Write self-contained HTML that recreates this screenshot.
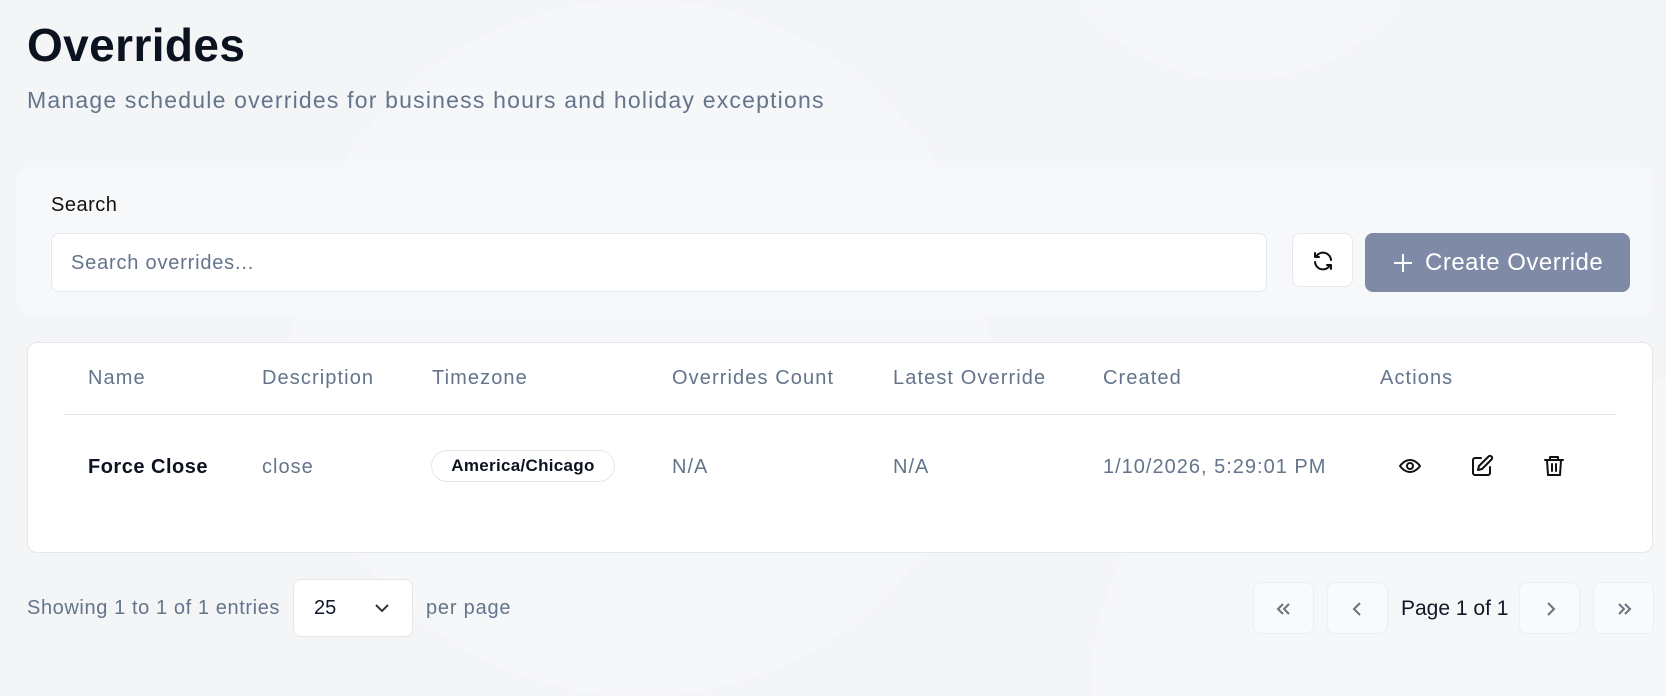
<!DOCTYPE html>
<html style="width:1666px;height:696px;overflow:hidden"><head><meta charset="utf-8"><style>
*{box-sizing:border-box;margin:0;padding:0}
body{width:1666px;height:696px;overflow:hidden;background:#f4f5f7;font-family:"Liberation Sans",sans-serif;position:relative;color:#0f172a}
.bg{position:absolute;left:0;top:0;width:1666px;height:696px;overflow:hidden}
.circ{position:absolute;border-radius:50%;background:#f6f7f9}
.abs{position:absolute}
h1{position:absolute;left:27px;top:18px;font-size:46px;font-weight:700;color:#0b1220;letter-spacing:0.4px}
.sub{position:absolute;left:27px;top:87px;font-size:23px;color:#64748b;letter-spacing:1.2px}
.panel{position:absolute;left:17px;top:167px;width:1636px;height:149px;background:#f7f8fa;border-radius:14px}
.lbl{position:absolute;left:51px;top:194px;font-size:20px;color:#111;letter-spacing:0.5px}
.inp{position:absolute;left:51px;top:233px;width:1216px;height:59px;background:#fff;border:1px solid #e2e8f0;border-radius:8px;padding-left:19px;line-height:59px;font-size:20px;color:#64748b;letter-spacing:0.8px}
.btn{position:absolute;background:#fff;border:1px solid #e5e7eb;border-radius:8px}
.create{position:absolute;left:1365px;top:233px;width:265px;height:59px;background:#7f8ba6;border-radius:8px;color:#fff;font-size:24px;line-height:59px;padding-left:60px;letter-spacing:0.5px}
.card{position:absolute;left:27px;top:342px;width:1626px;height:211px;background:#fff;border:1px solid #e5e7eb;border-radius:10px}
.th{position:absolute;top:367px;font-size:20px;color:#64748b;letter-spacing:1.1px}
.td{position:absolute;top:456px;font-size:20px;color:#64748b;letter-spacing:1px}
.pg{position:absolute;top:582px;width:61px;height:52px;background:#f9fafb;border:1px solid #eceef2;border-radius:8px}
</style></head><body>
<div class="bg">
<div class="circ" style="left:290px;top:0px;width:700px;height:696px"></div>
<div class="circ" style="left:1050px;top:-260px;width:380px;height:340px"></div>
<div class="circ" style="left:1090px;top:380px;width:576px;height:316px;border-radius:316px 0 0 0"></div>
</div>
<h1>Overrides</h1>
<div class="sub">Manage schedule overrides for business hours and holiday exceptions</div>
<div class="panel"></div>
<div class="lbl">Search</div>
<div class="inp">Search overrides...</div>
<div class="btn" style="left:1292px;top:233px;width:61px;height:54px">
<svg class="abs" style="left:18px;top:15px" width="24" height="24" viewBox="0 0 24 24" fill="none" stroke="#111" stroke-width="2" stroke-linecap="round" stroke-linejoin="round"><path d="M20 11A8 8 0 0 0 5.5 7M4 4v4h4"/><path d="M4 13a8 8 0 0 0 14.5 4M20 20v-4h-4"/></svg></div>
<div class="create"><svg class="abs" style="left:27px;top:19px" width="22" height="22" viewBox="0 0 22 22" stroke="#fff" stroke-width="2"><path d="M11 2v18M2 11h18"/></svg>Create Override</div>
<div class="card"></div>
<div class="th" style="left:88px">Name</div>
<div class="th" style="left:262px">Description</div>
<div class="th" style="left:432px">Timezone</div>
<div class="th" style="left:672px">Overrides Count</div>
<div class="th" style="left:893px">Latest Override</div>
<div class="th" style="left:1103px">Created</div>
<div class="th" style="left:1380px">Actions</div>
<div class="abs" style="left:64px;top:414px;width:1553px;height:1px;background:#e2e8f0"></div>
<div class="td" style="left:88px;color:#0b1220;font-weight:700;letter-spacing:0.5px">Force Close</div>
<div class="td" style="left:262px">close</div>
<div class="abs" style="left:431px;top:450px;width:184px;height:32px;border:1px solid #e2e8f0;border-radius:16px;text-align:center;line-height:30px;font-size:17px;font-weight:700;color:#0b1220;letter-spacing:0.3px">America/Chicago</div>
<div class="td" style="left:672px">N/A</div>
<div class="td" style="left:893px">N/A</div>
<div class="td" style="left:1103px">1/10/2026, 5:29:01 PM</div>
<svg class="abs" style="left:1398px;top:454px" width="24" height="24" viewBox="0 0 24 24" fill="none" stroke="#111" stroke-width="2"><path d="M2 12s4-6 10-6 10 6 10 6-4 6-10 6S2 12 2 12z"/><circle cx="12" cy="12" r="3"/></svg>
<svg class="abs" style="left:1470px;top:454px" width="24" height="24" viewBox="0 0 24 24" fill="none" stroke="#111" stroke-width="2" stroke-linejoin="round" stroke-linecap="round"><path d="M11 4H5a2 2 0 0 0-2 2v13a2 2 0 0 0 2 2h13a2 2 0 0 0 2-2v-6"/><path d="M18.5 2.5a2.1 2.1 0 0 1 3 3L12 15l-4 1 1-4z"/></svg>
<svg class="abs" style="left:1542px;top:454px" width="24" height="24" viewBox="0 0 24 24" fill="none" stroke="#111" stroke-width="2" stroke-linejoin="round" stroke-linecap="round"><path d="M3 6h18M8 6V3h8v3M5 6l1 15h12l1-15M10 10v7M14 10v7"/></svg>
<div class="abs" style="left:27px;top:597px;font-size:20px;color:#64748b;letter-spacing:0.6px">Showing 1 to 1 of 1 entries</div>
<div class="abs" style="left:293px;top:579px;width:120px;height:58px;background:#fff;border:1px solid #e5e7eb;border-radius:8px;font-size:20px;line-height:56px;padding-left:20px">25
<svg class="abs" style="left:80px;top:22px" width="16" height="12" viewBox="0 0 16 12" fill="none" stroke="#333" stroke-width="2"><path d="M2 3l6 6 6-6"/></svg></div>
<div class="abs" style="left:426px;top:597px;font-size:20px;color:#64748b;letter-spacing:0.8px">per page</div>
<div class="pg" style="left:1253px"><svg class="abs" style="left:20px;top:16px" width="20" height="20" viewBox="0 0 20 20" fill="none" stroke="#6b7280" stroke-width="2"><path d="M9 5l-5 5 5 5M15 5l-5 5 5 5"/></svg></div>
<div class="pg" style="left:1327px"><svg class="abs" style="left:20px;top:16px" width="20" height="20" viewBox="0 0 20 20" fill="none" stroke="#6b7280" stroke-width="2"><path d="M12 4l-6 6 6 6"/></svg></div>
<div class="abs" style="left:1401px;top:597px;font-size:21px;color:#111827">Page 1 of 1</div>
<div class="pg" style="left:1519px"><svg class="abs" style="left:20px;top:16px" width="20" height="20" viewBox="0 0 20 20" fill="none" stroke="#6b7280" stroke-width="2"><path d="M8 4l6 6-6 6"/></svg></div>
<div class="pg" style="left:1593px"><svg class="abs" style="left:20px;top:16px" width="20" height="20" viewBox="0 0 20 20" fill="none" stroke="#6b7280" stroke-width="2"><path d="M5 5l5 5-5 5M11 5l5 5-5 5"/></svg></div>
</body></html>
